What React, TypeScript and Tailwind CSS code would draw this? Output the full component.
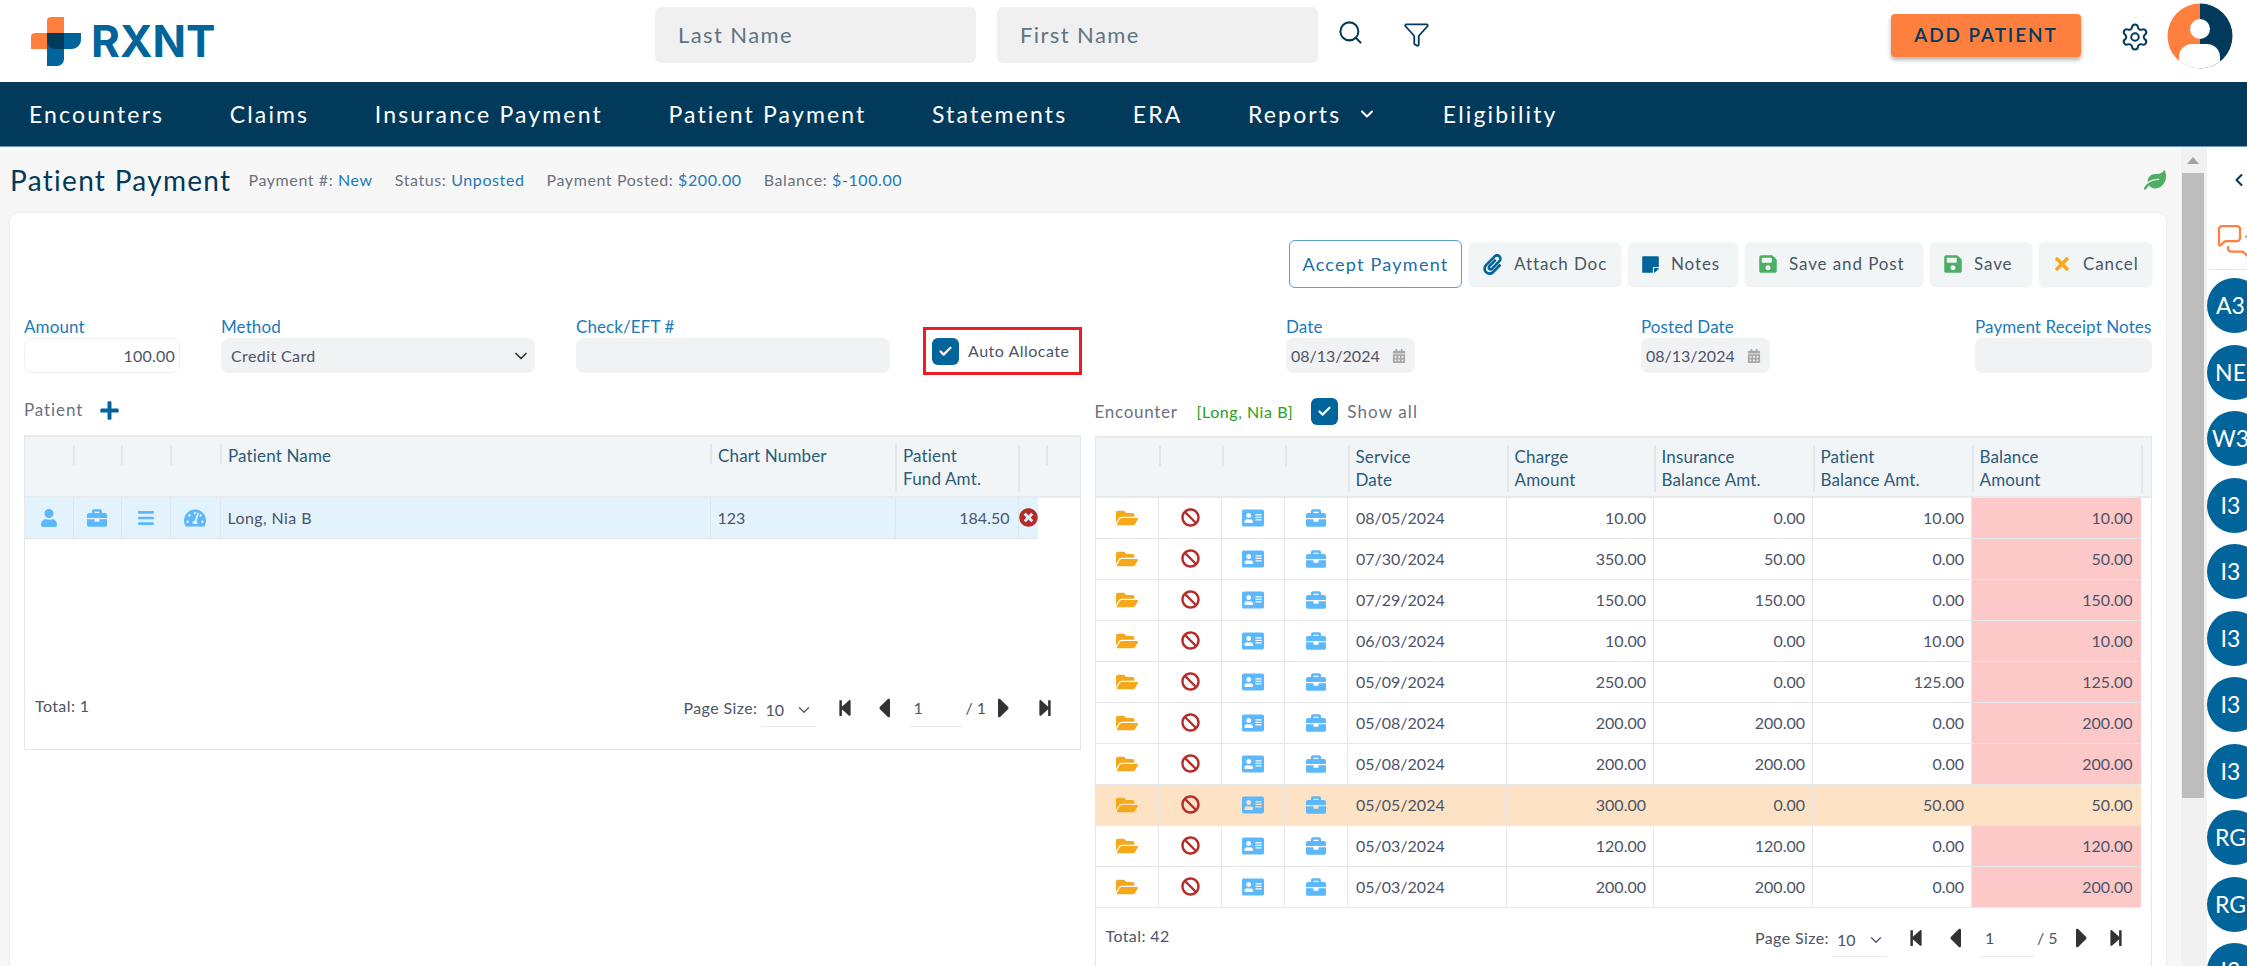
import { Check, ChevronDown, ChevronLeft, Filter, MessagesSquare, Search, Settings } from "lucide-react";
import {
  FaAddressCard,
  FaBan,
  FaBars,
  FaBriefcase,
  FaCalendarAlt,
  FaCaretLeft,
  FaCaretRight,
  FaFolderOpen,
  FaLeaf,
  FaPaperclip,
  FaPlus,
  FaSave,
  FaStepBackward,
  FaStepForward,
  FaStickyNote,
  FaTachometerAlt,
  FaTimes,
  FaTimesCircle,
  FaUser,
} from "react-icons/fa";

const NAV = ["Encounters", "Claims", "Insurance Payment", "Patient Payment", "Statements", "ERA", "Reports", "Eligibility"];
const PEOPLE = ["A3", "NE", "W3", "I3", "I3", "I3", "I3", "I3", "RG", "RG", "I3"];

type Row = { date: string; charge: string; ins: string; pat: string; bal: string; current?: boolean };

const ROWS: Row[] = [
  { date: "08/05/2024", charge: "10.00", ins: "0.00", pat: "10.00", bal: "10.00" },
  { date: "07/30/2024", charge: "350.00", ins: "50.00", pat: "0.00", bal: "50.00" },
  { date: "07/29/2024", charge: "150.00", ins: "150.00", pat: "0.00", bal: "150.00" },
  { date: "06/03/2024", charge: "10.00", ins: "0.00", pat: "10.00", bal: "10.00" },
  { date: "05/09/2024", charge: "250.00", ins: "0.00", pat: "125.00", bal: "125.00" },
  { date: "05/08/2024", charge: "200.00", ins: "200.00", pat: "0.00", bal: "200.00" },
  { date: "05/08/2024", charge: "200.00", ins: "200.00", pat: "0.00", bal: "200.00" },
  { date: "05/05/2024", charge: "300.00", ins: "0.00", pat: "50.00", bal: "50.00", current: true },
  { date: "05/03/2024", charge: "120.00", ins: "120.00", pat: "0.00", bal: "120.00" },
  { date: "05/03/2024", charge: "200.00", ins: "200.00", pat: "0.00", bal: "200.00" },
];

function Logo() {
  return (
    <div className="flex items-center">
      <svg width="52" height="52" viewBox="0 0 52 52" className="shrink-0">
        <path d="M16 3a4 4 0 0 1 4-4h13v32H0V19a4 4 0 0 1 4-4h12z" transform="translate(0 3)" fill="#ff7f3f" />
        <path d="M16 18h34v7a9 9 0 0 1-9 9h-8v10a7 7 0 0 1-7 7h-10z" fill="#01649b" />
        <path d="M16 18h17v16h-9a8 8 0 0 1-8-8z" fill="#023a5c" />
      </svg>
      <span className="ml-[8px] font-['Inter',sans-serif] text-[44px] leading-none font-bold text-[#01649b]">RXNT</span>
    </div>
  );
}

function Avatar() {
  return (
    <svg width="66" height="66" viewBox="0 0 66 66">
      <defs>
        <clipPath id="avatar-clip">
          <circle cx="33" cy="33" r="32.5" />
        </clipPath>
      </defs>
      <g clipPath="url(#avatar-clip)">
        <rect width="33" height="66" fill="#ff7f3f" />
        <rect x="33" width="33" height="66" fill="#023a5c" />
        <circle cx="33" cy="26" r="10" fill="#fff" />
        <rect x="12" y="41" width="41" height="40" rx="13" fill="#fff" />
      </g>
    </svg>
  );
}

function Header() {
  return (
    <header className="flex h-[82px] items-center bg-white">
      <div className="ml-[31px] w-[624px]">
        <Logo />
      </div>
      <input
        placeholder="Last Name"
        className="mb-[12px] h-[56px] w-[321px] rounded-md bg-[#f0f0f0] pb-[2px] pl-[23px] text-[22px] tracking-[1.4px] placeholder:text-[#5d7485] outline-none"
      />
      <input
        placeholder="First Name"
        className="mb-[12px] ml-[21px] h-[56px] w-[321px] rounded-md bg-[#f0f0f0] pb-[2px] pl-[23px] text-[22px] tracking-[1.4px] placeholder:text-[#5d7485] outline-none"
      />
      <Search size={27} strokeWidth={1.8} className="mb-[18px] ml-[19px] text-[#023a5c]" />
      <Filter size={27} strokeWidth={1.6} className="mb-[14px] ml-[39px] text-[#023a5c]" />
      <button className="mb-[11px] ml-auto h-[43px] w-[190px] rounded bg-[#ff7f3f] text-[19px] font-semibold tracking-[1.9px] text-[#023a5c] shadow-[0_3px_4px_rgba(0,0,0,0.3)]">
        ADD PATIENT
      </button>
      <Settings size={30} strokeWidth={1.6} className="mb-[8px] ml-[39px] text-[#023a5c]" />
      <div className="mb-[10px] ml-[17px] mr-[14px]">
        <Avatar />
      </div>
    </header>
  );
}

function Nav() {
  return (
    <nav className="flex h-[65px] items-center gap-[65.5px] border-b border-[#6f98b2] bg-[#023a5c] pl-[29px] text-[23px] tracking-[2.15px] text-white">
      {NAV.map((item) => (
        <a key={item} className="flex items-center">
          {item}
          {item === "Reports" && <ChevronDown size={20} strokeWidth={2.5} className="ml-[16px]" />}
        </a>
      ))}
    </nav>
  );
}

function Meta({ label, value }: { label: string; value: string }) {
  return (
    <span className="mr-[22px] text-[16px] tracking-[0.6px] text-[#6b7280]">
      {label} <span className="text-[#1c7ab8]">{value}</span>
    </span>
  );
}

function ToolButton({ icon, label, className }: { icon: React.ReactNode; label: string; className: string }) {
  return (
    <button className={`flex h-[44px] items-center gap-[11px] rounded-md bg-[#f1f5f6] pl-[13px] text-[17px] tracking-[0.9px] whitespace-nowrap text-[#4b5563] shadow-[0_1px_2px_rgba(0,0,0,0.08)] ${className}`}>
      {icon}
      {label}
    </button>
  );
}

function Field({ label, className, box = "bg-[#f1f2f4]", children }: { label: string; className: string; box?: string; children?: React.ReactNode }) {
  return (
    <div className={className}>
      <div className="h-[22px] text-[17px] leading-[22px] tracking-[0.1px] whitespace-nowrap text-[#1c7ab8]">{label}</div>
      <div className={`flex h-[35px] items-center rounded-lg px-[10px] text-[16px] tracking-[0.2px] text-[#4d5468] ${box}`}>{children}</div>
    </div>
  );
}

function Box() {
  return (
    <span className="flex h-[27px] w-[27px] items-center justify-center rounded-md bg-[#01649b]">
      <Check size={15} strokeWidth={3.5} className="text-white" />
    </span>
  );
}

function Pager({ total, pages, pt, slash, last }: { total: string; pages: string; pt: string; slash: string; last: string }) {
  return (
    <div className={`flex items-start pl-[10px] pr-[26px] text-[16px] text-[#4d5468] ${pt}`}>
      <span className="mt-[5px] tracking-[0.4px]">Total: {total}</span>
      <div className="ml-auto flex items-center">
        <span className="w-[77px] tracking-[0.4px] whitespace-nowrap">Page Size:</span>
        <span className="flex h-[38px] w-[55px] items-center gap-[11px] border-b border-[#e5e7eb] pl-[5px] pt-[5px]">
          10
          <ChevronDown size={18} strokeWidth={1.6} />
        </span>
        <FaStepBackward size={18} className="ml-[20px] text-[#333]" />
        <FaCaretLeft size={32} className="ml-[14px] text-[#333]" />
        <span className="ml-[9px] flex h-[38px] w-[54px] items-center border-b border-[#e5e7eb] pl-[5px] pt-[2px]">1</span>
        <span className={`ml-[3px] whitespace-nowrap ${slash}`}>/ {pages}</span>
        <FaCaretRight size={32} className="text-[#333]" />
        <FaStepForward size={18} className={`text-[#333] ${last}`} />
      </div>
    </div>
  );
}

function Head({ lines = [], h = "h-[20px]", inset }: { lines?: string[]; h?: string; inset?: boolean }) {
  return (
    <th className="p-0 align-top font-normal">
      <div className={`mt-[8px] ${h} border-l-2 border-[#e3e7ea] pl-[6px] text-left text-[17px] leading-[23.5px] tracking-[0.15px] text-[#2c5b7a] ${inset ? "ml-[8px]" : ""}`}>
        {lines.map((line) => (
          <div key={line} className="-mt-[1px] whitespace-nowrap">
            {line}
          </div>
        ))}
      </div>
    </th>
  );
}

function PatientTable() {
  const icons = [
    <FaUser size={18} />,
    <FaBriefcase size={20} />,
    <FaBars size={18} />,
    <FaTachometerAlt size={22} />,
  ];
  return (
    <div className="h-[315px] border border-t-0 border-[#e5e7eb]">
      <table className="w-full table-fixed border-collapse">
        <colgroup>
          <col className="w-[48px]" />
          <col className="w-[48px]" />
          <col className="w-[49px]" />
          <col className="w-[50px]" />
          <col className="w-[490px]" />
          <col className="w-[185px]" />
          <col className="w-[123px]" />
          <col className="w-[20px]" />
          <col />
        </colgroup>
        <thead>
          <tr className="h-[61px] border-y-2 border-y-[#e8ebed] bg-[#f1f5f7]">
            <th className="p-0" />
            <Head />
            <Head />
            <Head />
            <Head lines={["Patient Name"]} />
            <Head lines={["Chart Number"]} />
            <Head lines={["Patient", "Fund Amt."]} h="h-[47px]" />
            <Head h="h-[47px]" />
            <Head inset />
          </tr>
        </thead>
        <tbody>
          <tr className="h-[41px] text-[16px] text-[#4d5468]">
            {icons.map((icon, i) => (
              <td key={i} className="border-r border-b border-[#dfe5e9] bg-[#e3f3fd] p-0 text-[#5cb8fb]">
                <div className="flex justify-center">{icon}</div>
              </td>
            ))}
            <td className="border-r border-b border-[#dfe5e9] bg-[#e3f3fd] px-[7px] tracking-[0.4px]">Long, Nia B</td>
            <td className="border-r border-b border-[#dfe5e9] bg-[#e3f3fd] px-[7px]">123</td>
            <td className="border-r border-b border-[#dfe5e9] bg-[#e3f3fd] px-[8px] text-right">184.50</td>
            <td className="border-b border-[#dfe5e9] bg-[#e3f3fd] p-0">
              <FaTimesCircle size={19} className="text-[#b52b27]" />
            </td>
            <td />
          </tr>
        </tbody>
      </table>
      <Pager total="1" pages="1" pt="pt-[150px]" slash="w-[22px]" last="ml-[16px]" />
    </div>
  );
}

function EncounterTable() {
  return (
    <div className="border border-t-0 border-[#e5e7eb]">
      <table className="w-full table-fixed border-collapse">
        <colgroup>
          <col className="w-[63px]" />
          <col className="w-[63px]" />
          <col className="w-[63px]" />
          <col className="w-[63px]" />
          <col className="w-[159px]" />
          <col className="w-[147px]" />
          <col className="w-[159px]" />
          <col className="w-[159px]" />
          <col className="w-[169px]" />
          <col />
        </colgroup>
        <thead>
          <tr className="h-[60px] border-y-2 border-y-[#e8ebed] bg-[#f1f5f7]">
            <th className="p-0" />
            <Head />
            <Head />
            <Head />
            <Head lines={["Service", "Date"]} h="h-[47px]" />
            <Head lines={["Charge", "Amount"]} h="h-[47px]" />
            <Head lines={["Insurance", "Balance Amt."]} h="h-[47px]" />
            <Head lines={["Patient", "Balance Amt."]} h="h-[47px]" />
            <Head lines={["Balance", "Amount"]} h="h-[47px]" />
            <Head h="h-[47px]" />
          </tr>
        </thead>
        <tbody>
          {ROWS.map((row, i) => {
            const cell = row.current ? "bg-[#fde3c3]" : "";
            return (
              <tr key={i} className="h-[41px] text-[16px] text-[#4d5468]">
                <td className={`border-r border-b border-[#e5e7eb] p-0 ${cell}`}>
                  <div className="flex justify-center text-[#f5a81c]">
                    <FaFolderOpen size={22} />
                  </div>
                </td>
                <td className={`border-r border-b border-[#e5e7eb] p-0 ${cell}`}>
                  <div className="flex justify-center text-[#b52b27]">
                    <FaBan size={19} />
                  </div>
                </td>
                <td className={`border-r border-b border-[#e5e7eb] p-0 ${cell}`}>
                  <div className="flex justify-center text-[#5cb8fb]">
                    <FaAddressCard size={22} />
                  </div>
                </td>
                <td className={`border-r border-b border-[#e5e7eb] p-0 ${cell}`}>
                  <div className="flex justify-center text-[#5cb8fb]">
                    <FaBriefcase size={20} />
                  </div>
                </td>
                <td className={`border-r border-b border-[#e5e7eb] px-[8px] ${cell}`}>{row.date}</td>
                <td className={`border-r border-b border-[#e5e7eb] px-[7px] text-right ${cell}`}>{row.charge}</td>
                <td className={`border-r border-b border-[#e5e7eb] px-[7px] text-right ${cell}`}>{row.ins}</td>
                <td className={`border-r border-b border-[#e5e7eb] px-[7px] text-right ${cell}`}>{row.pat}</td>
                <td className={`border-b border-[#e5e7eb] px-[8px] text-right ${row.current ? "bg-[#fde3c3]" : "bg-[#fdc9c8]"}`}>{row.bal}</td>
                <td />
              </tr>
            );
          })}
        </tbody>
      </table>
      <Pager total="42" pages="5" pt="pt-[11px]" slash="w-[29px]" last="ml-[9px]" />
      <div className="h-[30px]" />
    </div>
  );
}

function Card() {
  return (
    <section className="rounded-t-lg bg-white px-[14px] pt-[27px] shadow-[0_0_3px_rgba(0,0,0,0.1)]">
      <div className="flex items-center justify-end gap-[7px]">
        <button className="h-[48px] w-[173px] rounded-md border border-[#5f9dc4] text-[18px] tracking-[1.25px] whitespace-nowrap text-[#1c6ea4]">Accept Payment</button>
        <ToolButton className="w-[152px]" icon={<FaPaperclip size={21} className="text-[#01649b]" />} label="Attach Doc" />
        <ToolButton className="w-[110px]" icon={<FaStickyNote size={19} className="text-[#01649b]" />} label="Notes" />
        <ToolButton className="w-[178px]" icon={<FaSave size={20} className="text-[#4caf63]" />} label="Save and Post" />
        <ToolButton className="w-[102px]" icon={<FaSave size={20} className="text-[#4caf63]" />} label="Save" />
        <ToolButton className="w-[113px]" icon={<FaTimes size={20} className="text-[#f5a81c]" />} label="Cancel" />
      </div>

      <div className="mt-[28px] flex items-start">
        <Field label="Amount" className="w-[156px]" box="bg-white border border-[#f0f0f0]">
          <span className="-mr-[6px] ml-auto">100.00</span>
        </Field>
        <Field label="Method" className="ml-[41px] w-[314px]">
          <span className="tracking-[0.4px]">Credit Card</span>
          <ChevronDown size={20} className="ml-auto -mr-[6px] text-[#333]" />
        </Field>
        <Field label="Check/EFT #" className="ml-[41px] w-[314px]" />
        <div className="mt-[11px] ml-[33px] flex h-[48px] w-[159px] items-center gap-[9px] border-[3px] border-[#ed1c24] pl-[6px] text-[16px] tracking-[0.5px] text-[#4d5468]">
          <Box />
          <span className="whitespace-nowrap">Auto Allocate</span>
        </div>
        <Field label="Date" className="ml-[204px] w-[129px]">
          <span className="-ml-[5px] tracking-normal">08/13/2024</span>
          <FaCalendarAlt size={14} className="ml-auto -mr-[1px] text-[#a8a8a8]" />
        </Field>
        <Field label="Posted Date" className="ml-[226px] w-[129px]">
          <span className="-ml-[5px] tracking-normal">08/13/2024</span>
          <FaCalendarAlt size={14} className="ml-auto -mr-[1px] text-[#a8a8a8]" />
        </Field>
        <Field label="Payment Receipt Notes" className="ml-[205px] w-[177px]" />
      </div>

      <div className="mt-[18px] flex items-start gap-[14px]">
        <div className="w-[1057px]">
          <div className="flex h-[42px] items-center gap-[16px] pb-[8px] text-[17px] tracking-[0.9px] text-[#6b7280]">
            Patient
            <FaPlus size={21} className="text-[#01649b]" />
          </div>
          <PatientTable />
        </div>
        <div className="w-[1058px]">
          <div className="flex h-[43px] items-center pb-[6px] text-[17px] tracking-[0.7px] text-[#6b7280]">
            Encounter
            <span className="ml-[19px] text-[16px] tracking-[0.55px] text-[#27a022]">[Long, Nia B]</span>
            <span className="ml-[18px]">
              <Box />
            </span>
            <span className="ml-[9px] tracking-[1.1px]">Show all</span>
          </div>
          <EncounterTable />
        </div>
      </div>
    </section>
  );
}

function Sidebar() {
  return (
    <aside className="w-[40px] shrink-0 overflow-hidden bg-white pt-[23px]">
      <ChevronLeft size={20} strokeWidth={2.5} className="ml-[22px] text-[#023a5c]" />
      <MessagesSquare size={36} strokeWidth={1.5} className="mt-[33px] ml-[9px] text-[#ff7f3f]" />
      <div className="mt-[10px] ml-[2px] border-t border-[#e5e7eb]" />
      <div className="mt-[8px] flex flex-col gap-[11.5px]">
        {PEOPLE.map((p, i) => (
          <div key={i} className="flex h-[55px] w-[55px] shrink-0 items-center justify-center rounded-full bg-[#01649b] pr-[8px] text-[23px] text-white">
            {p}
          </div>
        ))}
      </div>
    </aside>
  );
}

export default function App() {
  return (
    <div className="flex h-screen flex-col overflow-hidden bg-[#f7f7f7] font-['Lato',sans-serif]">
      <Header />
      <Nav />
      <div className="flex min-h-0 flex-1">
        <main className="min-w-0 flex-1 overflow-hidden pl-[10px] pr-[15px]">
          <div className="flex h-[66px] items-center">
            <h1 className="mr-[17px] text-[28px] tracking-[1.3px] text-[#023a5c]">Patient Payment</h1>
            <Meta label="Payment #:" value="New" />
            <Meta label="Status:" value="Unposted" />
            <Meta label="Payment Posted:" value="$200.00" />
            <Meta label="Balance:" value="$-100.00" />
            <FaLeaf size={22} className="ml-auto text-[#4caf63]" />
          </div>
          <Card />
        </main>
        <div className="flex w-[26px] shrink-0 flex-col bg-[#f1f1f1] pl-[1px] pr-[3px]">
          <div className="flex h-[26px] items-center justify-center">
            <span className="h-0 w-0 border-x-[6px] border-b-[7px] border-x-transparent border-b-[#a3a3a3]" />
          </div>
          <div className="h-[625px] bg-[#bdbdbd]" />
        </div>
        <Sidebar />
      </div>
    </div>
  );
}
